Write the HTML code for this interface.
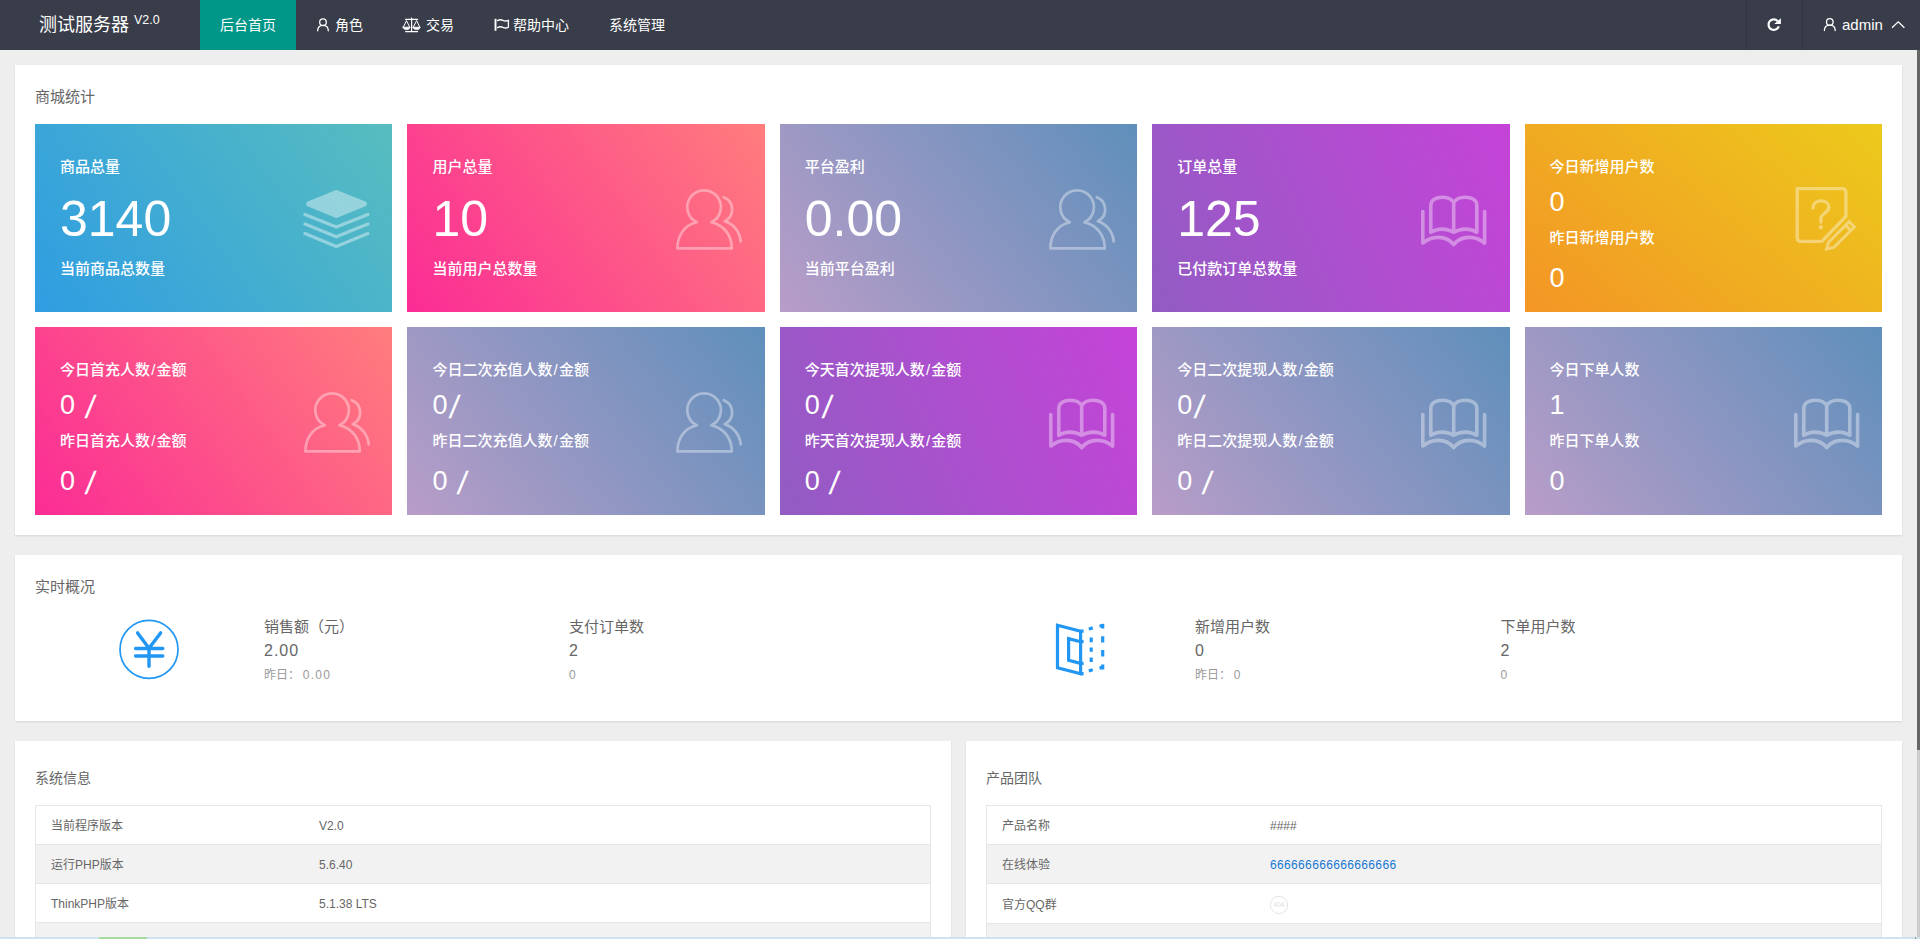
<!DOCTYPE html>
<html lang="zh-CN">
<head>
<meta charset="utf-8">
<title>测试服务器</title>
<style>
*{margin:0;padding:0;box-sizing:border-box}
html,body{width:1920px;height:939px;overflow:hidden}
body{position:relative;background:#eee;font-family:"Liberation Sans","Noto Sans CJK SC",sans-serif;font-size:14px;color:#666}
.abs{position:absolute}
#hd{position:absolute;left:0;top:0;width:1920px;height:50px;background:#393d49;color:#fff}
#hd .t{position:absolute;top:0;height:50px;line-height:50px;white-space:nowrap;color:#fff}
#hd svg{position:absolute;overflow:visible}
.card{position:absolute;background:#fff;box-shadow:0 1px 2px 0 rgba(0,0,0,.1)}
.ttl{position:absolute;left:20px;top:20px;height:24px;line-height:24px;font-size:14px;color:#666;white-space:nowrap}
.tile{position:absolute;width:357.4px;height:188px;color:#fff;overflow:hidden}
.tile div{position:absolute;left:25px;white-space:nowrap;color:#fff}
.tile .l{font-size:15px;height:36px;line-height:36px;font-weight:500}
.tile .n{font-size:50px;height:66px;line-height:66px;top:62px}
.tile .m{font-size:27px;height:34px;line-height:34px}
.tile .s{margin:0 1.2px}
.tile .sl{display:inline-block;font-size:32px;line-height:34px;width:12.5px;margin-left:3px;transform:skewX(-8deg);transform-origin:50% 50%;vertical-align:-4px}
.tile svg{position:absolute;left:265px;top:60px;width:75px;height:70px;overflow:visible}
.c1{background:linear-gradient(-125deg,#57bdbf,#2f9de2)}
.c2{background:linear-gradient(-125deg,#ff7d7d,#fb2c95)}
.c3{background:linear-gradient(-128deg,#5f8fbb,#b89dc8)}
.c4{background:linear-gradient(-113deg,#c543d8,#925cc3)}
.c5{background:linear-gradient(-141deg,#ecca1b,#f39526)}
.ic{fill:none;stroke:#fff;stroke-opacity:.38;stroke-linecap:round;stroke-linejoin:round}
.st div{position:absolute;white-space:nowrap}
.st .a{font-size:15px;color:#666;height:24px;line-height:24px}
.st .b{font-size:16px;color:#666;height:24px;line-height:24px;letter-spacing:1px}
.st .c{font-size:12px;color:#999;height:20px;line-height:20px}
.st .d{letter-spacing:1.3px;margin-left:2.7px}
table{position:absolute;left:20px;top:64px;border-collapse:collapse;table-layout:fixed;font-size:12px;color:#666}
td{border:1px solid #e6e6e6;border-left:0;border-right:0;height:39px;padding:2px 15px 0;line-height:20px;white-space:nowrap}
table{border:1px solid #e6e6e6}
tr:nth-child(even) td{background:#f2f2f2}
a{color:#1677d2;text-decoration:none;letter-spacing:.35px}
</style>
</head>
<body>
<!-- HEADER -->
<div id="hd">
  <div class="t" style="left:39px;font-size:18px;top:0">测试服务器</div>
  <div class="t" style="left:134px;font-size:12.5px;top:-5.5px">V2.0</div>
  <div class="abs" style="left:200px;top:0;width:96px;height:50px;background:#009688"></div>
  <div class="t" style="left:220px">后台首页</div>
  <div class="t" style="left:335px">角色</div>
  <div class="t" style="left:426px">交易</div>
  <div class="t" style="left:513px">帮助中心</div>
  <div class="t" style="left:609px">系统管理</div>
  <div class="abs" style="left:1746px;top:0;width:1px;height:50px;background:#30343f"></div>
  <div class="abs" style="left:1802px;top:0;width:1px;height:50px;background:#30343f"></div>
  <div class="t" style="left:1842px;font-size:15px">admin</div>
  <svg width="1917" height="50" viewBox="0 0 1917 50" style="left:0;top:0" fill="none" stroke="#fff" stroke-linecap="round" stroke-linejoin="round">
    <!-- user (role) -->
    <circle cx="323" cy="22.2" r="3.3" stroke-width="1.3"/>
    <path stroke-width="1.3" d="M317.7 30.8C317.7 27 320 25.4 323 25.4C326 25.4 328.3 27 328.3 30.8"/>
    <!-- balance -->
    <g stroke-width="1.2">
      <path d="M405.6 19.4H417.6M411.6 18.2V31.5M405.6 31.6H417.6"/>
      <path stroke-width="1" d="M403.5 26.9 406.5 20.6 409.6 26.9M413.4 26.9 416.6 20.6 419.7 26.9"/>
      <path fill="#fff" stroke-width=".8" d="M403 27.2H410.1C409.6 29 408.3 29.6 406.5 29.6C404.8 29.6 403.5 29 403 27.2ZM413 27.2H420.2C419.7 29 418.4 29.6 416.6 29.6C414.9 29.6 413.5 29 413 27.2Z"/>
    </g>
    <!-- flag -->
    <path stroke-width="1.9" stroke-linecap="butt" d="M495.5 18.8V30.8"/>
    <path stroke-width="1.3" d="M497.4 20.6C499.5 19.4 501.5 19.6 503 20.4C504.8 21.3 506.6 21.2 508.4 20.2V27.2C506.6 28.2 504.8 28.3 503 27.4C501.5 26.6 499.5 26.4 497.4 27.6"/>
    <!-- refresh -->
    <path stroke-width="2.2" stroke-linecap="butt" d="M1777.6 20.9A5.3 5.3 0 1 0 1778.8 26.3"/>
    <path fill="#fff" stroke="none" d="M1780.9 18.2V24H1774.2Z"/>
    <!-- user (admin) -->
    <circle cx="1829.8" cy="21.9" r="3.3" stroke-width="1.3"/>
    <path stroke-width="1.3" d="M1824.4 30.6C1824.4 26.8 1826.8 25.2 1829.8 25.2C1832.8 25.2 1835.2 26.8 1835.2 30.6"/>
    <!-- chevron up -->
    <path stroke-width="1.3" stroke-linecap="butt" stroke-linejoin="miter" d="M1892 27.8 1898.2 21.8 1904.4 27.8"/>
  </svg>
</div>

<!-- CARD 1 -->
<div class="card" style="left:15px;top:65px;width:1887px;height:470px">
  <div class="ttl" style="font-size:15px">商城统计</div>
  <div class="tile c1" style="left:20.0px;top:59px">
    <div class="l" style="top:25px">商品总量</div>
    <div class="n">3140</div>
    <div class="l" style="top:127px">当前商品总数量</div>
    <svg viewBox="0 0 75 70"><g opacity=".4" fill="#fff" stroke="#fff" stroke-linejoin="round" stroke-linecap="round"><path stroke-width="5" d="M8.6 19.9 36.3 8.5 64.4 19.9 36.3 31.4Z"/><path fill="none" stroke-width="3.2" d="M4.9 30.5 36.3 42.9 67.9 30.5M4.9 40.1 36.3 52.8 67.9 40.1M4.9 49.6 36.3 62.6 67.9 49.6"/></g></svg>
  </div>
  <div class="tile c2" style="left:392.4px;top:59px">
    <div class="l" style="top:25px">用户总量</div>
    <div class="n">10</div>
    <div class="l" style="top:127px">当前用户总数量</div>
    <svg viewBox="0 0 75 70"><g class="ic" stroke-width="2.7"><path d="M24.8 38.3A16.8 16.8 0 1 1 39.4 38.3C52.8 41.5 59.8 52 59.8 64.4H5.4C5.4 52 11.6 41.5 24.8 38.3Z"/><path d="M51.7 13.2A13 13 0 0 1 52.8 37.1C61.6 40 68.1 48 68.7 57.4"/></g></svg>
  </div>
  <div class="tile c3" style="left:764.8px;top:59px">
    <div class="l" style="top:25px">平台盈利</div>
    <div class="n">0.00</div>
    <div class="l" style="top:127px">当前平台盈利</div>
    <svg viewBox="0 0 75 70"><g class="ic" stroke-width="2.7"><path d="M24.8 38.3A16.8 16.8 0 1 1 39.4 38.3C52.8 41.5 59.8 52 59.8 64.4H5.4C5.4 52 11.6 41.5 24.8 38.3Z"/><path d="M51.7 13.2A13 13 0 0 1 52.8 37.1C61.6 40 68.1 48 68.7 57.4"/></g></svg>
  </div>
  <div class="tile c4" style="left:1137.2px;top:59px">
    <div class="l" style="top:25px">订单总量</div>
    <div class="n">125</div>
    <div class="l" style="top:127px">已付款订单总数量</div>
    <svg viewBox="0 0 75 70"><g class="ic" stroke-width="3.6"><path d="M13.8 48.3V21.5C13.8 16 19 13.2 25.5 13.2C30.5 13.2 34.6 15 36.7 18.4C38.9 15 43 13.2 48 13.2C54.5 13.2 59.8 16 59.8 21.5V48.3C53.5 44 43.5 44 36.7 48.3C30 44 20 44 13.8 48.3ZM36.7 18V48.3"/><path d="M5.8 27.5V59C15 51.5 29 51 36.7 60.5C44.5 51 58.5 51.5 67.6 59V27.5"/></g></svg>
  </div>
  <div class="tile c5" style="left:1509.6px;top:59px">
    <div class="l" style="top:25px">今日新增用户数</div>
    <div class="m" style="top:61px">0</div>
    <div class="l" style="top:96px">昨日新增用户数</div>
    <div class="m" style="top:137px">0</div>
    <svg viewBox="0 0 75 70"><g class="ic" stroke-width="3.4"><path stroke-linejoin="miter" d="M7.2 4.6H52Q55.9 4.6 55.9 8.5V32.3L31.9 57.4H11Q7.2 57.4 7.2 53.5Z"/><path d="M23 24C23 19.5 26.5 16.9 30.9 16.9C35.5 16.9 38.9 19.5 38.9 23.5C38.9 28.5 30.9 29.5 30.9 34.5V38"/><circle cx="30.9" cy="43.2" r="1" stroke-width="2.4"/><path stroke-linejoin="miter" stroke-width="3" d="M36.5 65 38.6 58.2 59.1 37.7 64.3 43 43.9 63.4ZM55.5 41.3 60.7 46.6"/></g></svg>
  </div>
  <div class="tile c2" style="left:20.0px;top:262px">
    <div class="l" style="top:25px">今日首充人数<span class="s">/</span>金额</div>
    <div class="m" style="top:61px">0 <span class="sl">/</span></div>
    <div class="l" style="top:96px">昨日首充人数<span class="s">/</span>金额</div>
    <div class="m" style="top:137px">0 <span class="sl">/</span></div>
    <svg viewBox="0 0 75 70"><g class="ic" stroke-width="2.7"><path d="M24.8 38.3A16.8 16.8 0 1 1 39.4 38.3C52.8 41.5 59.8 52 59.8 64.4H5.4C5.4 52 11.6 41.5 24.8 38.3Z"/><path d="M51.7 13.2A13 13 0 0 1 52.8 37.1C61.6 40 68.1 48 68.7 57.4"/></g></svg>
  </div>
  <div class="tile c3" style="left:392.4px;top:262px">
    <div class="l" style="top:25px">今日二次充值人数<span class="s">/</span>金额</div>
    <div class="m" style="top:61px">0<span class="sl">/</span></div>
    <div class="l" style="top:96px">昨日二次充值人数<span class="s">/</span>金额</div>
    <div class="m" style="top:137px">0 <span class="sl">/</span></div>
    <svg viewBox="0 0 75 70"><g class="ic" stroke-width="2.7"><path d="M24.8 38.3A16.8 16.8 0 1 1 39.4 38.3C52.8 41.5 59.8 52 59.8 64.4H5.4C5.4 52 11.6 41.5 24.8 38.3Z"/><path d="M51.7 13.2A13 13 0 0 1 52.8 37.1C61.6 40 68.1 48 68.7 57.4"/></g></svg>
  </div>
  <div class="tile c4" style="left:764.8px;top:262px">
    <div class="l" style="top:25px">今天首次提现人数<span class="s">/</span>金额</div>
    <div class="m" style="top:61px">0<span class="sl">/</span></div>
    <div class="l" style="top:96px">昨天首次提现人数<span class="s">/</span>金额</div>
    <div class="m" style="top:137px">0 <span class="sl">/</span></div>
    <svg viewBox="0 0 75 70"><g class="ic" stroke-width="3.6"><path d="M13.8 48.3V21.5C13.8 16 19 13.2 25.5 13.2C30.5 13.2 34.6 15 36.7 18.4C38.9 15 43 13.2 48 13.2C54.5 13.2 59.8 16 59.8 21.5V48.3C53.5 44 43.5 44 36.7 48.3C30 44 20 44 13.8 48.3ZM36.7 18V48.3"/><path d="M5.8 27.5V59C15 51.5 29 51 36.7 60.5C44.5 51 58.5 51.5 67.6 59V27.5"/></g></svg>
  </div>
  <div class="tile c3" style="left:1137.2px;top:262px">
    <div class="l" style="top:25px">今日二次提现人数<span class="s">/</span>金额</div>
    <div class="m" style="top:61px">0<span class="sl">/</span></div>
    <div class="l" style="top:96px">昨日二次提现人数<span class="s">/</span>金额</div>
    <div class="m" style="top:137px">0 <span class="sl">/</span></div>
    <svg viewBox="0 0 75 70"><g class="ic" stroke-width="3.6"><path d="M13.8 48.3V21.5C13.8 16 19 13.2 25.5 13.2C30.5 13.2 34.6 15 36.7 18.4C38.9 15 43 13.2 48 13.2C54.5 13.2 59.8 16 59.8 21.5V48.3C53.5 44 43.5 44 36.7 48.3C30 44 20 44 13.8 48.3ZM36.7 18V48.3"/><path d="M5.8 27.5V59C15 51.5 29 51 36.7 60.5C44.5 51 58.5 51.5 67.6 59V27.5"/></g></svg>
  </div>
  <div class="tile c3" style="left:1509.6px;top:262px">
    <div class="l" style="top:25px">今日下单人数</div>
    <div class="m" style="top:61px">1</div>
    <div class="l" style="top:96px">昨日下单人数</div>
    <div class="m" style="top:137px">0</div>
    <svg viewBox="0 0 75 70"><g class="ic" stroke-width="3.6"><path d="M13.8 48.3V21.5C13.8 16 19 13.2 25.5 13.2C30.5 13.2 34.6 15 36.7 18.4C38.9 15 43 13.2 48 13.2C54.5 13.2 59.8 16 59.8 21.5V48.3C53.5 44 43.5 44 36.7 48.3C30 44 20 44 13.8 48.3ZM36.7 18V48.3"/><path d="M5.8 27.5V59C15 51.5 29 51 36.7 60.5C44.5 51 58.5 51.5 67.6 59V27.5"/></g></svg>
  </div>
</div>

<!-- CARD 2 -->
<div class="card st" style="left:15px;top:555px;width:1887px;height:166px">
  <div class="ttl" style="font-size:15px">实时概况</div>
  <svg class="abs" style="left:100px;top:60px" width="70" height="70" viewBox="115 615 70 70" fill="none" stroke="#2196f3" stroke-linecap="round" stroke-linejoin="round">
    <circle cx="149" cy="649.4" r="29" stroke-width="1.7"/>
    <path stroke-width="3.4" d="M137.6 632.9 149 648.3 160.6 632.9M149 648.3V666.3M135.6 648.5H162.8M135.6 656H162.8"/>
  </svg>
  <div class="a" style="left:249px;top:60px">销售额（元）</div>
  <div class="b" style="left:249px;top:84px">2.00</div>
  <div class="c" style="left:249px;top:110px">昨日：<span class="d">0.00</span></div>
  <div class="a" style="left:554px;top:60px">支付订单数</div>
  <div class="b" style="left:554px;top:84px">2</div>
  <div class="c" style="left:554px;top:110px">0</div>
  <svg class="abs" style="left:1030px;top:60px" width="70" height="70" viewBox="1045 615 70 70" fill="none" stroke="#2196f3" stroke-width="3.2" stroke-linejoin="miter">
    <path d="M1057.5 625.2 1080.6 631.2V673.7L1057.5 667.7Z"/>
    <path d="M1080.6 641.7 1068.6 638.6V660.3L1080.6 663.4"/>
    <path d="M1080.6 631.2H1083.6M1080.6 641.7H1083.6M1080.6 663.4H1083.6M1080.6 673.7H1083.6"/>
    <path d="M1088.8 629 1092.8 627.9M1099.5 626.2 1103.6 625.1"/>
    <path d="M1088.8 670.9 1092.8 669.8M1099.5 668.1 1103.6 667"/>
    <path d="M1102.7 624V628.4M1102.7 636.2V642.6M1102.7 650V656.4M1102.7 664.4V669.4"/>
    <path d="M1091.2 637.6V642.2M1091.2 647.4V651.8M1091.2 657.4V662"/>
  </svg>
  <div class="a" style="left:1180px;top:60px">新增用户数</div>
  <div class="b" style="left:1180px;top:84px">0</div>
  <div class="c" style="left:1180px;top:110px">昨日：<span class="d">0</span></div>
  <div class="a" style="left:1485.5px;top:60px">下单用户数</div>
  <div class="b" style="left:1485.5px;top:84px">2</div>
  <div class="c" style="left:1485.5px;top:110px">0</div>
</div>

<!-- CARD 3 -->
<div class="card" style="left:15px;top:741px;width:936px;height:260px">
  <div class="ttl" style="top:25px">系统信息</div>
  <table style="width:896px"><colgroup><col style="width:30%"><col></colgroup>
    <tr><td>当前程序版本</td><td>V2.0</td></tr>
    <tr><td>运行PHP版本</td><td>5.6.40</td></tr>
    <tr><td>ThinkPHP版本</td><td>5.1.38 LTS</td></tr>
    <tr><td>&nbsp;</td><td>&nbsp;</td></tr>
  </table>
</div>
<div class="card" style="left:966px;top:741px;width:936px;height:260px">
  <div class="ttl" style="top:25px">产品团队</div>
  <table style="width:896px"><colgroup><col style="width:30%"><col></colgroup>
    <tr><td>产品名称</td><td>####</td></tr>
    <tr><td>在线体验</td><td><a>666666666666666666</a></td></tr>
    <tr style="height:40px"><td style="height:40px">官方QQ群</td><td><svg width="20" height="20" viewBox="0 0 20 20" style="display:block;margin-left:-1px;margin-top:1px"><circle cx="10" cy="10" r="8.6" fill="none" stroke="#e4e4e4" stroke-width="1"/><text x="10" y="12.4" font-size="6.5" text-anchor="middle" fill="#dcdcdc" font-family="Liberation Sans, sans-serif">404</text></svg></td></tr>
    <tr><td>&nbsp;</td><td>&nbsp;</td></tr>
  </table>
</div>

<!-- scrollbar + bottom bar -->
<div class="abs" style="left:1917px;top:50px;width:3px;height:889px;background:#ccc"></div>
<div class="abs" style="left:1917px;top:50px;width:3px;height:700px;background:#666"></div>
<div class="abs" style="left:0;top:937px;width:1920px;height:2px;background:#d0e2ee"></div>
<div class="abs" style="left:99px;top:937px;width:48px;height:2px;background:#a5dba0"></div>
<div class="abs" style="left:1915px;top:937px;width:1px;height:2px;background:#999"></div>
</body>
</html>
